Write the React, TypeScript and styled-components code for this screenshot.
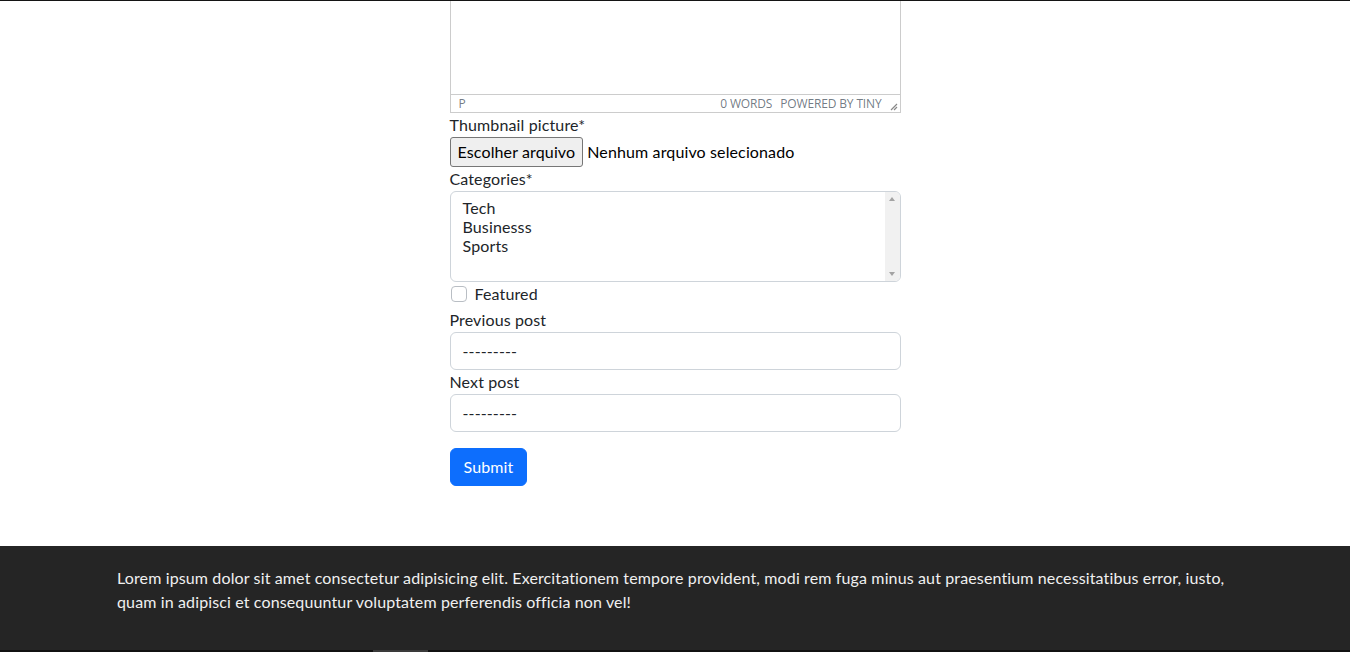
import React from "react";
import styled, { createGlobalStyle } from "styled-components";

const Global = createGlobalStyle`
  html, body { margin: 0; padding: 0; background: #fff; }
  body {
    font-family: Lato, "Noto Sans", "Liberation Sans", sans-serif;
    font-size: 16px;
    line-height: 24px;
    letter-spacing: 0.13px;
    color: #212529;
  }
  * { box-sizing: border-box; }
`;

const Page = styled.div`
  display: flex;
  flex-direction: column;
  min-height: 652px;
  border-top: 1px solid #141414;
`;

const Main = styled.main`
  display: flex;
  justify-content: center;
  padding-bottom: 60px;
`;

const Form = styled.form`
  width: 451px;
  display: flex;
  flex-direction: column;
`;

const Editor = styled.div`
  border: 1px solid #ccc;
  border-top: none;
  display: flex;
  flex-direction: column;
`;

const EditorBody = styled.div`
  height: 93px;
  background: #fff;
`;

const StatusBar = styled.div`
  height: 18px;
  border-top: 1px solid #ccc;
  display: flex;
  align-items: center;
  padding: 0 2px 0 8px;
  font-family: "Open Sans", "Noto Sans", sans-serif;
  font-size: 12px;
  letter-spacing: -0.15px;
  line-height: 16px;
  color: rgba(34, 47, 62, 0.65);
  text-transform: uppercase;
`;

const StatusPath = styled.span`
  flex: 1;
`;

const StatusItem = styled.span`
  margin-left: 8px;
`;

const Resize = styled.svg`
  margin-left: 6px;
  width: 10px;
  height: 10px;
  align-self: flex-end;
  margin-bottom: 1px;
`;

const Label = styled.label`
  display: block;
  margin-top: 0;
`;

const FileRow = styled.div`
  display: flex;
  align-items: center;
  height: 30px;
`;

const FileButton = styled.button`
  font: inherit;
  letter-spacing: inherit;
  height: 30px;
  padding: 0 7px;
  background: #efefef;
  color: #000;
  border: 1px solid #767676;
  border-radius: 3px;
  margin-right: 4px;
`;

const FileText = styled.span`
  color: #000;
`;

const ListBox = styled.div`
  height: 91px;
  border: 1px solid #ced4da;
  border-radius: 6px;
  display: flex;
  overflow: hidden;
`;

const Options = styled.div`
  flex: 1;
  padding: 6px 12px;
  display: flex;
  flex-direction: column;
  line-height: 19px;
`;

const Option = styled.div``;

const ScrollTrack = styled.div`
  width: 15px;
  background: #f1f1f1;
  display: flex;
  flex-direction: column;
  justify-content: space-between;
  align-items: center;
  padding: 5px 0;
`;

const Arrow = styled.span<{ $up?: boolean }>`
  width: 0;
  height: 0;
  border-left: 3.5px solid transparent;
  border-right: 3.5px solid transparent;
  ${(p) =>
    p.$up
      ? "border-bottom: 4px solid #a3a3a3;"
      : "border-top: 4px solid #a3a3a3;"}
`;

const CheckRow = styled.div`
  display: flex;
  align-items: center;
  margin-top: 3px;
  height: 18px;
`;

const CheckBox = styled.span`
  width: 16px;
  height: 16px;
  border: 1px solid #b9bec4;
  border-radius: 4px;
  margin-right: 8px;
  margin-left: 1px;
`;

const SelectLabel = styled.label`
  display: block;
  margin-top: 5px;
`;

const Select = styled.div`
  height: 38px;
  border: 1px solid #ced4da;
  border-radius: 6px;
  padding: 6px 12px;
  line-height: 24px;
`;

const NextLabel = styled.label`
  display: block;
`;

const Submit = styled.button`
  align-self: flex-start;
  margin-top: 16px;
  font: inherit;
  letter-spacing: inherit;
  height: 38px;
  padding: 6px 13px;
  color: #fff;
  background: #0d6efd;
  border: 1px solid #0d6efd;
  border-radius: 6px;
`;

const Footer = styled.footer`
  background: #252525;
  color: #f0f0f0;
  padding: 20px 0 20px;
  display: flex;
  justify-content: center;
`;

const FooterInner = styled.div`
  width: 1140px;
  padding: 0 12px;
`;

const FooterText = styled.p`
  margin: 0 0 16px;
`;

const BottomStrip = styled.div`
  height: 2px;
  background: #111;
  display: flex;
`;

const StripThumb = styled.div`
  margin-left: 373px;
  width: 55px;
  background: #3a3a3a;
`;

export default function App() {
  return (
    <>
      <Global />
      <Page>
        <Main>
          <Form onSubmit={(e) => e.preventDefault()}>
            <Editor>
              <EditorBody />
              <StatusBar>
                <StatusPath>p</StatusPath>
                <StatusItem>0 words</StatusItem>
                <StatusItem>Powered by Tiny</StatusItem>
                <Resize viewBox="0 0 10 10">
                  <path d="M9 3 L3 9 M9 6 L6 9" stroke="#888" strokeWidth="1.2" fill="none" />
                </Resize>
              </StatusBar>
            </Editor>
            <Label>Thumbnail picture*</Label>
            <FileRow>
              <FileButton type="button">Escolher arquivo</FileButton>
              <FileText>Nenhum arquivo selecionado</FileText>
            </FileRow>
            <Label>Categories*</Label>
            <ListBox>
              <Options>
                <Option>Tech</Option>
                <Option>Businesss</Option>
                <Option>Sports</Option>
              </Options>
              <ScrollTrack>
                <Arrow $up />
                <Arrow />
              </ScrollTrack>
            </ListBox>
            <CheckRow>
              <CheckBox />
              <span>Featured</span>
            </CheckRow>
            <SelectLabel>Previous post</SelectLabel>
            <Select>---------</Select>
            <NextLabel>Next post</NextLabel>
            <Select>---------</Select>
            <Submit type="submit">Submit</Submit>
          </Form>
        </Main>
        <Footer>
          <FooterInner>
            <FooterText>
              Lorem ipsum dolor sit amet consectetur adipisicing elit. Exercitationem tempore provident, modi rem fuga minus aut praesentium necessitatibus error, iusto, quam in adipisci et consequuntur voluptatem perferendis officia non vel!
            </FooterText>
          </FooterInner>
        </Footer>
        <BottomStrip>
          <StripThumb />
        </BottomStrip>
      </Page>
    </>
  );
}
